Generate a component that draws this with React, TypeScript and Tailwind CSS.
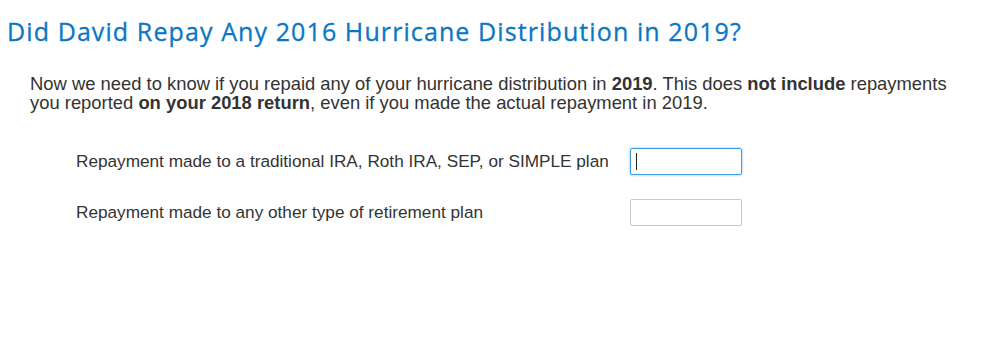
export default function App() {
  return (
    <div className="w-[999px] h-[338px] bg-white overflow-hidden">
      <h1
        className="pl-[7px] pt-[16px] text-[25px] leading-[30px] text-[#0a77c5] font-normal tracking-[1.1px] [-webkit-text-stroke:0.3px_#0a77c5]"
        style={{ fontFamily: "'Open Sans', Lato, sans-serif" }}
      >
        Did David Repay Any 2016 Hurricane Distribution in 2019?
      </h1>
      <div style={{ fontFamily: "'Liberation Sans', Arial, sans-serif" }} className="text-[#333333]">
        <p className="pl-[30px] mt-[28px] text-[18.4px] leading-[19px]">
          Now we need to know if you repaid any of your hurricane distribution in <b>2019</b>. This does{" "}
          <b>not include</b> repayments
          <br />
          you reported <b>on your 2018 return</b>, even if you made the actual repayment in 2019.
        </p>
        <div className="pl-[76px] mt-[36px] flex flex-col gap-[24px]">
          <div className="flex items-center">
            <span className="w-[554px] text-[17.2px] leading-[19px]">
              Repayment made to a traditional IRA, Roth IRA, SEP, or SIMPLE plan
            </span>
            <div className="relative">
              <input
                className="block w-[112px] h-[27px] border border-[#3d9de0] rounded-[2px] outline-none shadow-[0_0_3px_rgba(61,157,224,0.6)] px-[4px] text-[16px]"
              />
              <span className="absolute left-[6px] top-[5px] w-[1px] h-[17px] bg-[#222222]" />
            </div>
          </div>
          <div className="flex items-center">
            <span className="w-[554px] text-[17.2px] leading-[19px]">
              Repayment made to any other type of retirement plan
            </span>
            <input className="block w-[112px] h-[27px] border border-[#c9c9c9] rounded-[2px] outline-none px-[4px] text-[16px]" />
          </div>
        </div>
      </div>
    </div>
  );
}
